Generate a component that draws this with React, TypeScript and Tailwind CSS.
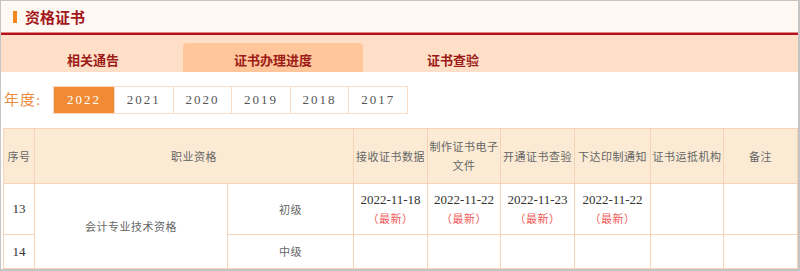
import React, { useState } from 'react';

const years = ['2022', '2021', '2020', '2019', '2018', '2017'];
const tabs = ['相关通告', '证书办理进度', '证书查验'];

const headers = ['接收证书数据', '制作证书电子文件', '开通证书查验', '下达印制通知', '证书运抵机构', '备注'];
const colWidths = [31, 193, 126, 74, 73, 74, 76, 73, 74];

const rows = [
  { no: '13', level: '初级', dates: ['2022-11-18', '2022-11-22', '2022-11-23', '2022-11-22', '', ''] },
  { no: '14', level: '中级', dates: ['', '', '', '', '', ''] },
];

const sans = { fontFamily: '"Noto Sans CJK SC", "Noto Sans", sans-serif' };
const serif = { fontFamily: '"Liberation Serif", "Noto Sans CJK SC", serif' };

export default function App() {
  const [tab, setTab] = useState(1);
  const [year, setYear] = useState('2022');

  return (
    <div className="w-[800px] h-[271px] overflow-hidden bg-white border-t border-l border-r-2 border-b-2 border-[#c4c4c4]" style={sans}>
      {/* header */}
      <div className="h-[31px] bg-[#fff8f3] flex items-center pl-[12px] gap-[8px]">
        <span className="w-[4px] h-[12px] bg-[#f2881d]" />
        <h2 className="text-[15px] font-bold text-[#a3171c] leading-none">资格证书</h2>
      </div>
      <div className="h-[1px] bg-[#e0888a]" />
      <div className="h-[2px] bg-[#b5121b]" />

      {/* tabs */}
      <div className="h-[37px] bg-[#ffdfc7] flex items-end pl-[2px]">
        {tabs.map((t, i) => (
          <button
            key={t}
            onClick={() => setTab(i)}
            className={`w-[180px] h-[29px] flex items-center justify-center text-[13px] font-bold text-[#9c1c17] rounded-t-[4px] pt-[5px] ${tab === i ? 'bg-[#ffc59b]' : ''}`}
          >
            {t}
          </button>
        ))}
      </div>

      {/* years */}
      <div className="flex items-center mt-[14px] h-[28px]">
        <span className="w-[52px] pl-[3px] text-[15px] text-[#ea8a3e] tracking-[1px]" style={serif}>年度:</span>
        <div className="flex border border-[#f8dcc7]">
          {years.map((y, i) => (
            <button
              key={y}
              onClick={() => setYear(y)}
              className={`h-[26px] text-[13px] tracking-[2px] ${i === 0 ? 'w-[60px]' : 'w-[58.6px] border-l border-[#f8dcc7]'} ${year === y ? 'bg-[#f08a35] text-white' : 'text-[#555]'}`}
              style={serif}
            >
              {y}
            </button>
          ))}
        </div>
      </div>

      {/* table */}
      <table className="ml-[2px] mt-[14px] border-collapse table-fixed text-[11px] tracking-[0.5px] text-[#666] w-[794px]">
        <colgroup>
          {colWidths.map((w, i) => (
            <col key={i} style={{ width: w }} />
          ))}
        </colgroup>
        <thead>
          <tr className="bg-[#fbebd5] h-[55px]">
            <th className="border border-[#f6d3b6] font-normal">序号</th>
            <th colSpan={2} className="border border-[#f6d3b6] font-normal">职业资格</th>
            {headers.map((h) => (
              <th key={h} className="border border-[#f6d3b6] font-normal leading-[19px] px-[1px]">
                {h}
              </th>
            ))}
          </tr>
        </thead>
        <tbody>
          {rows.map((r, ri) => (
            <tr key={r.no} className={ri === 0 ? 'h-[51px]' : 'h-[34px]'}>
              <td className="border border-[#f6d3b6] text-center text-[13px] tracking-normal text-[#333]" style={serif}>{r.no}</td>
              {ri === 0 && (
                <td rowSpan={2} className="border border-[#f6d3b6] text-center">会计专业技术资格</td>
              )}
              <td className="border border-[#f6d3b6] text-center">{r.level}</td>
              {r.dates.map((d, di) => (
                <td key={di} className="border border-[#f6d3b6] text-center align-middle">
                  {d && (
                    <div className="flex flex-col items-center leading-[19px]">
                      <span className="text-[13px] tracking-normal text-[#333]" style={serif}>{d}</span>
                      <span className="text-[#f25a5a]">（最新）</span>
                    </div>
                  )}
                </td>
              ))}
            </tr>
          ))}
        </tbody>
      </table>
    </div>
  );
}
